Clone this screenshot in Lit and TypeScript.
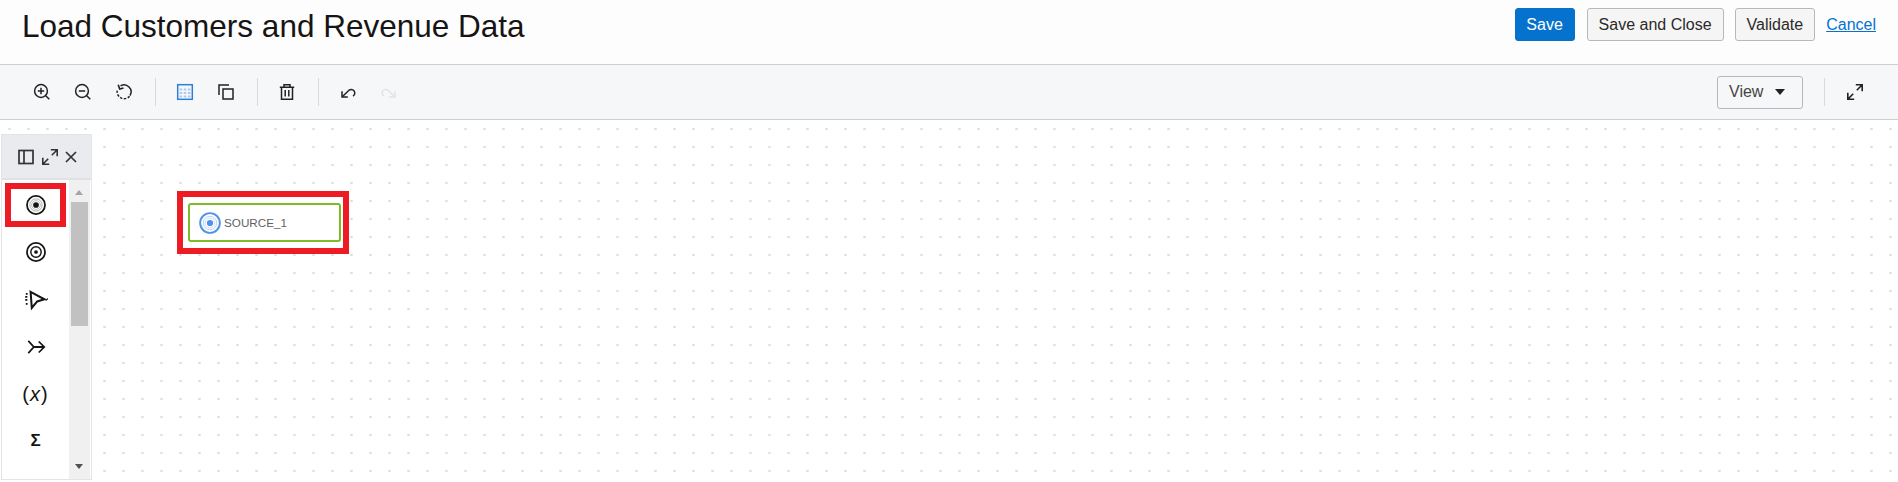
import { LitElement, css, html, svg } from 'lit';
import { customElement } from 'lit/decorators.js';

const icon = (body: unknown, size = 20) =>
  html`<svg width=${size} height=${size} viewBox="0 0 20 20" fill="none" stroke="currentColor" stroke-width="1.5">${body}</svg>`;

const zoomIn = svg`<circle cx="9" cy="9" r="6.400"/><path d="M13.700 13.700l3.600 3.600M9 5.800v6.400M5.800 9h6.400"/>`;
const zoomOut = svg`<circle cx="9" cy="9" r="6.400"/><path d="M13.700 13.700l3.600 3.600M5.800 9h6.400"/>`;
const reset = svg`<path d="M6.500 3.800a7 7 0 0 1 9.500 9.700"/><path d="M15.500 14.200a7 7 0 0 1-12.300-5.500" stroke-dasharray="2.400 1.500"/><path d="M4.200 2.800l1.500 4.300 3.800-1.200" stroke-width="1.600"/>`;
const grid = svg`<rect x="2.700" y="2.700" width="14.600" height="14.600" stroke="#2f7fd8" stroke-width="1.500"/>
  <path d="M4.500 6.500h2.600v2h-2.600zM8.700 6.500h2.600v2h-2.600zM12.900 6.500h2.600v2h-2.600zM4.500 10h2.600v2h-2.600zM8.700 10h2.600v2h-2.600zM12.900 10h2.600v2h-2.600zM4.500 13.500h2.600v2h-2.600zM8.700 13.500h2.600v2h-2.600zM12.900 13.500h2.600v2h-2.600z" fill="#a9cdf2" stroke="none"/>`;
const copy = svg`<path d="M3 13V3h10"/><rect x="7" y="7" width="10" height="10"/>`;
const trash = svg`<path d="M2.800 5.200h14.400M7 5V2.700h6V5M4.500 5.200v12h11v-12M8.200 8v6.500M11.800 8v6.500"/>`;
const undo = svg`<path d="M4.500 14.500L11 8.200c2.600-1.900 5.800 0 5.800 2.700 0 1.500-.8 2.600-1.800 3.200"/><path d="M4 9.200v5.800h5.800"/>`;
const redo = svg`<path d="M15.500 14.500L9 8.200c-2.600-1.900-5.800 0-5.800 2.700 0 1.500.8 2.600 1.800 3.200"/><path d="M16 9.200v5.800h-5.800"/>`;
const expand = svg`<path d="M2.800 17.200l5.400-5.400M11.800 8.200l5.400-5.400M10.800 2.800h6.400v6.400M2.800 10.800v6.400h6.400" stroke-width="1.600"/>`;
const panel = svg`<rect x="3" y="3.500" width="14" height="13" stroke-width="1.700"/><path d="M8 3.500v13" stroke-width="1.700"/>`;
const close = svg`<path d="M5 5l10 10M15 5L5 15" stroke-width="1.700"/>`;
const source = svg`<circle cx="10" cy="10" r="8.200" stroke-width="1.600"/><circle cx="10" cy="10" r="5.600" stroke-width=".7" opacity=".45"/><circle cx="10" cy="10" r="4" stroke-width=".7" opacity=".35"/><circle cx="10" cy="10" r="2.600" fill="currentColor" stroke="none"/>`;
const target = svg`<circle cx="10" cy="10" r="8.200" stroke-width="1.600"/><circle cx="10" cy="10" r="4.700" stroke-width="1.300"/><circle cx="10" cy="10" r="1.700" fill="currentColor" stroke="none"/>`;
const filter = svg`<path d="M5.500 4L17 10.200 11 12 6.500 17.500z" stroke-width="1.700"/><path d="M1.500 5.800h1.500M1 8.300h1.800M1 10.800h1.800M1.500 14h1.500M18 10.800h1M19.400 10h.6" stroke-width="1.500"/>`;
const join = svg`<path d="M3 4.500l5 5.500-5 5.500M8.500 10h9M12.500 5l5 5-5 5" stroke-width="1.600"/>`;

type Tool = { body: unknown; cls: string; sepAfter?: boolean };

const tools: Tool[] = [
  { body: zoomIn, cls: 'i' },
  { body: zoomOut, cls: 'i' },
  { body: reset, cls: 'i', sepAfter: true },
  { body: grid, cls: 'i' },
  { body: copy, cls: 'i', sepAfter: true },
  { body: trash, cls: 'i', sepAfter: true },
  { body: undo, cls: 'i' },
  { body: redo, cls: 'i off' }
];

@customElement('app-root')
export class AppRoot extends LitElement {
  public static override styles = css`
    :host {
      display: block;
      height: 482px;
      overflow: hidden;
      font-family: 'Liberation Sans', Arial, sans-serif;
      color: #161513;
      background: #fff;
    }

    .head {
      display: flex;
      align-items: flex-start;
      height: 56px;
      padding: 8px 22px 0;
      background: #fdfdfe;
      border-bottom: 1px solid #cfcfcf;
    }

    h1 {
      margin: -1px 0 0;
      font-size: 31.500px;
      font-weight: 400;
      line-height: 38px;
    }

    .actions {
      display: flex;
      align-items: center;
      margin-left: auto;
      gap: 11px;
    }

    button {
      height: 33px;
      padding: 0 11px;
      border: 1px solid #b5b9bf;
      border-radius: 3px;
      background: #f5f5f5;
      color: #2b2a28;
      font: 16px 'Liberation Sans', Arial, sans-serif;
    }

    button.primary {
      width: 60px;
      margin-right: 1px;
      padding: 0;
      background: #0572ce;
      border-color: #0572ce;
      color: #fff;
    }

    a {
      color: #0572ce;
      font-size: 16px;
      text-decoration: underline;
    }

    .bar {
      display: flex;
      align-items: center;
      height: 54px;
      padding: 0 33px 0 21.500px;
      background: #f6f7f9;
      border-bottom: 1px solid #cfcfcf;
      color: #222;
    }

    .i {
      display: flex;
      align-items: center;
      justify-content: center;
      width: 41px;
      height: 28px;
    }

    .off {
      color: #e0e2e5;
    }

    .sep {
      width: 1px;
      height: 28px;
      margin: 0 9px 0 10px;
      background: #d5dbe3;
    }

    .view {
      display: flex;
      align-items: center;
      justify-content: space-between;
      width: 86px;
      margin-left: auto;
      box-sizing: border-box;
      padding: 0 17px 0 11px;
      background: #f6f7f9;
      color: #444;
    }

    .caret {
      width: 0;
      height: 0;
      border: 5.500px solid transparent;
      border-top: 6px solid #222;
      border-bottom: 0;
    }

    .sep.last {
      margin: 0 20px 0 21px;
    }

    .canvas {
      position: relative;
      height: 362px;
      background-color: #fff;
      background-image: radial-gradient(circle, #dcdcdc 1px, transparent 1.300px);
      background-size: 19px 18px;
    }

    .palette {
      position: absolute;
      left: 2px;
      top: 15px;
      display: flex;
      flex-direction: column;
      width: 89px;
      height: 344px;
      background: #fff;
      box-shadow: 0 0 0 1px #e3e4e7;
    }

    .ptitle {
      display: flex;
      align-items: center;
      gap: 1px;
      height: 43px;
      padding-left: 14px;
      background: #eaebef;
      border-bottom: 2px solid #e0e1e5;
      color: #333;
    }

    .ptitle svg:first-child {
      margin-right: 3px;
    }

    .pbody {
      display: flex;
      flex: 1;
      min-height: 0;
    }

    .items {
      display: flex;
      flex-direction: column;
      width: 67px;
      padding-top: 3px;
    }

    .item {
      display: flex;
      align-items: center;
      justify-content: center;
      width: 61px;
      height: 47.300px;
      margin-left: 3px;
      box-sizing: border-box;
    }

    .item.mark {
      height: 44px;
      margin-bottom: 1.600px;
      border: 6px solid #ed1c24;
    }

    .item.lift svg {
      margin-top: -2px;
    }

    .fx {
      font-size: 20px;
      letter-spacing: 1px;
    }

    .sum {
      font-size: 17px;
      font-weight: 700;
    }

    .track {
      position: relative;
      width: 21px;
      background: #f0f0f0;
    }

    .up,
    .down {
      position: absolute;
      left: 6px;
      width: 0;
      height: 0;
      border: 4.500px solid transparent;
    }

    .up {
      top: 10px;
      border-top: 0;
      border-bottom: 5px solid #a5a5a5;
    }

    .down {
      bottom: 10px;
      border-bottom: 0;
      border-top: 5px solid #505050;
    }

    .thumb {
      position: absolute;
      top: 22px;
      left: 2px;
      width: 17px;
      height: 124px;
      background: #c1c1c1;
    }

    .mark-node {
      position: absolute;
      left: 177px;
      top: 71px;
      width: 172px;
      height: 63px;
      box-sizing: border-box;
      padding: 6px 2px 6px 5px;
      border: 6px solid #ed1c24;
      background: #fff;
    }

    .node {
      display: flex;
      align-items: center;
      gap: 2px;
      height: 100%;
      box-sizing: border-box;
      padding-left: 8px;
      border: 2px solid #7fba28;
      border-radius: 3px;
      color: #4f92e6;
    }

    .node span {
      color: #5f5f5f;
      font-size: 11.700px;
    }
  `;

  public override render() {
    return html`
      <div class="head">
        <h1>Load Customers and Revenue Data</h1>
        <div class="actions">
          <button class="primary">Save</button>
          <button>Save and Close</button>
          <button>Validate</button>
          <a href="#">Cancel</a>
        </div>
      </div>
      <div class="bar">
        ${tools.map(
          (t) => html`<div class=${t.cls}>${icon(t.body)}</div>${t.sepAfter ? html`<div class="sep"></div>` : null}`
        )}
        <button class="view">View<span class="caret"></span></button>
        <div class="sep last"></div>
        ${icon(expand)}
      </div>
      <div class="canvas">
        <div class="palette">
          <div class="ptitle">${icon(panel)}${icon(expand)}${icon(close)}</div>
          <div class="pbody">
            <div class="items">
              <div class="item mark">${icon(source, 22)}</div>
              <div class="item">${icon(target, 22)}</div>
              <div class="item lift">${icon(filter, 24)}</div>
              <div class="item">${icon(join, 22)}</div>
              <div class="item"><span class="fx">(<i>x</i>)</span></div>
              <div class="item"><span class="sum">Σ</span></div>
            </div>
            <div class="track">
              <span class="up"></span>
              <div class="thumb"></div>
              <span class="down"></span>
            </div>
          </div>
        </div>
        <div class="mark-node">
          <div class="node">${icon(source, 24)}<span>SOURCE_1</span></div>
        </div>
      </div>
    `;
  }
}
